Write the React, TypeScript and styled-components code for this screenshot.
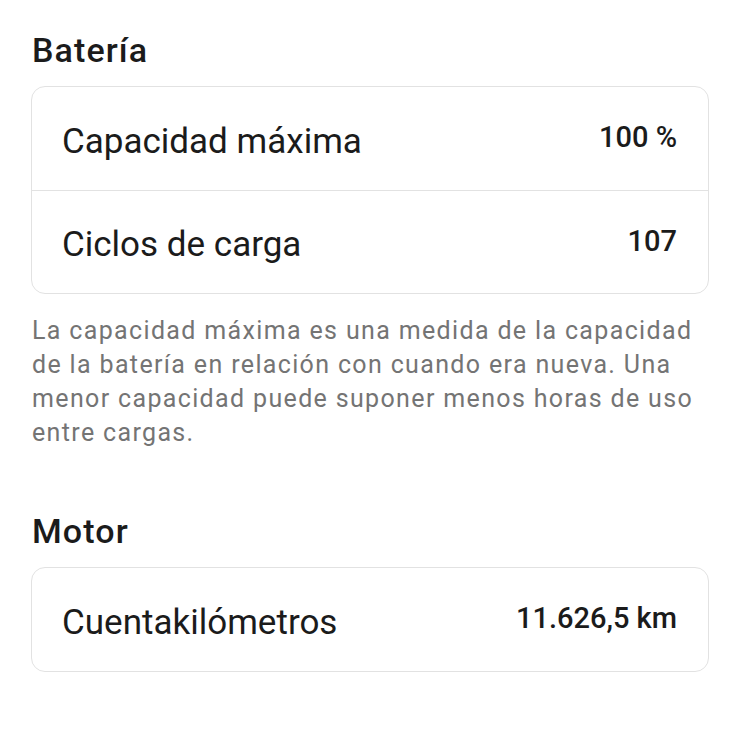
import * as React from 'react';
import styled, { createGlobalStyle } from 'styled-components';

const GlobalStyle = createGlobalStyle`
  html, body {
    margin: 0;
    padding: 0;
    background: #ffffff;
  }
  body {
    font-family: Roboto, 'Liberation Sans', sans-serif;
    color: #1b1b1b;
  }
`;

const Page = styled.div`
  display: flex;
  flex-direction: column;
  width: 739px;
  padding: 28px 30px 0 31px;
  box-sizing: border-box;
`;

const Section = styled.section<{ $gap?: number }>`
  display: flex;
  flex-direction: column;
  margin-top: ${({ $gap }) => $gap ?? 0}px;
`;

const SectionTitle = styled.h2`
  margin: 0 0 14px 1px;
  font-size: 34px;
  font-weight: 500;
  line-height: 44px;
  letter-spacing: 1.1px;
  color: #1b1b1b;
`;

const Card = styled.div`
  display: flex;
  flex-direction: column;
  border: 1.5px solid #e2e2e2;
  border-radius: 14px;
  background: #ffffff;
`;

const Row = styled.div`
  display: flex;
  justify-content: space-between;
  align-items: center;
  height: 103px;
  padding: 0 31px 0 30px;
  box-sizing: border-box;
  & + & {
    border-top: 1.5px solid #e2e2e2;
  }
`;

const Label = styled.span`
  font-size: 35px;
  font-weight: 400;
  color: #1b1b1b;
  margin-top: 5px;
`;

const Value = styled.span`
  font-size: 29px;
  font-weight: 500;
  color: #1b1b1b;
  margin-top: -3px;
`;

const Note = styled.p`
  margin: 20px 0 0 1px;
  font-size: 25px;
  line-height: 34px;
  letter-spacing: 1.35px;
  color: #747474;
`;

const batteryRows = [
  { label: 'Capacidad máxima', value: '100 %' },
  { label: 'Ciclos de carga', value: '107' },
];

export default function App() {
  return (
    <>
      <GlobalStyle />
      <Page>
        <Section>
          <SectionTitle>Batería</SectionTitle>
          <Card>
            {batteryRows.map((r) => (
              <Row key={r.label}>
                <Label>{r.label}</Label>
                <Value>{r.value}</Value>
              </Row>
            ))}
          </Card>
          <Note>
            La capacidad máxima es una medida de la capacidad de la batería en
            relación con cuando era nueva. Una menor capacidad puede suponer
            menos horas de uso entre cargas.
          </Note>
        </Section>
        <Section $gap={59}>
          <SectionTitle>Motor</SectionTitle>
          <Card>
            <Row>
              <Label>Cuentakilómetros</Label>
              <Value>11.626,5 km</Value>
            </Row>
          </Card>
        </Section>
      </Page>
    </>
  );
}
